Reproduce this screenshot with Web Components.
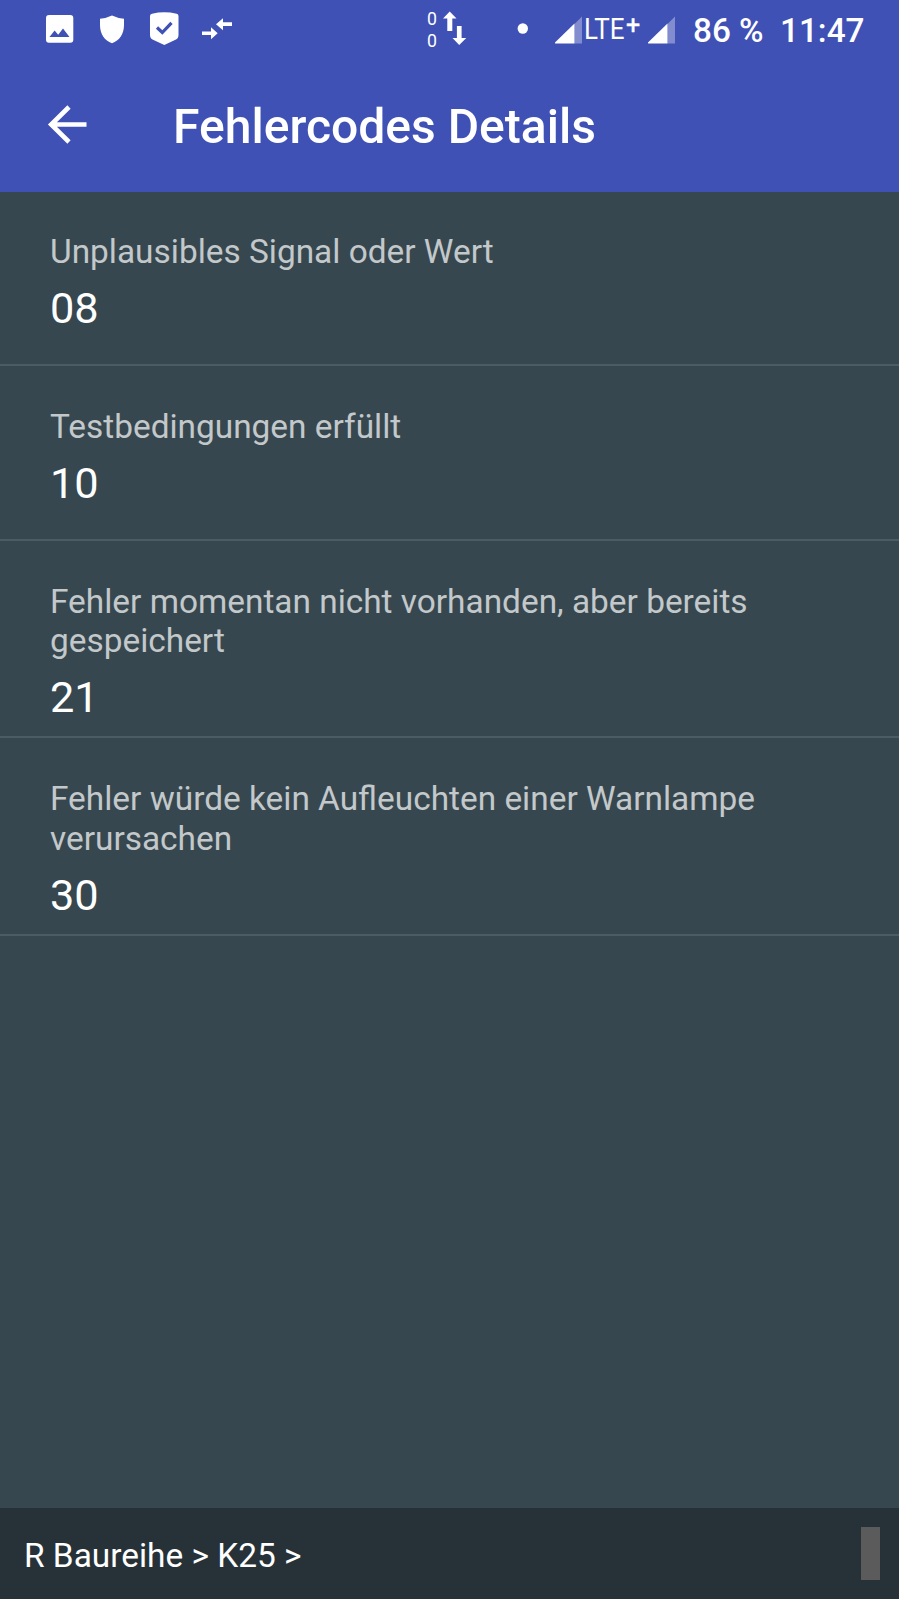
<!DOCTYPE html>
<html lang="de">
<head>
<meta charset="utf-8">
<title>Fehlercodes Details</title>
<style>
html,body{margin:0;height:100%;background:#37474f}
body{font-family:Roboto,"Noto Sans",sans-serif;color:#fff;overflow:hidden}
</style>
</head>
<body>
<fault-screen>
  <status-bar slot="top"></status-bar>
  <app-bar slot="top">Fehlercodes Details</app-bar>
  <fault-item><span>Unplausibles Signal oder Wert</span><span slot="code">08</span></fault-item>
  <fault-item><span>Testbedingungen erfüllt</span><span slot="code">10</span></fault-item>
  <fault-item><span>Fehler momentan nicht vorhanden, aber bereits gespeichert</span><span slot="code">21</span></fault-item>
  <fault-item><span>Fehler würde kein Aufleuchten einer Warnlampe verursachen</span><span slot="code">30</span></fault-item>
  <path-bar slot="bottom">R Baureihe &gt; K25 &gt;</path-bar>
</fault-screen>
<script>
const define = (name, html) => customElements.define(name, class extends HTMLElement {
  constructor() {
    super();
    this.attachShadow({mode: 'open'}).innerHTML = html;
  }
});

define('fault-screen', `
<style>
:host{display:flex;flex-direction:column;height:1599px;width:899px;background:#37474f}
header{height:192px;margin-bottom:-1px;background:#3f51b5;flex:none}
main{flex:1}
</style>
<header><slot name="top"></slot></header>
<main><slot></slot></main>
<slot name="bottom"></slot>`);

define('status-bar', `
<style>
:host{display:flex;height:60px;padding-left:46px;box-sizing:border-box;align-items:flex-start;fill:#fff}
svg{display:block;height:60px;flex:none}
span{white-space:nowrap;flex:none;line-height:40px;font-size:33.3px;font-weight:500}
.rate{display:flex;flex-direction:column;width:14px;margin:8px 0 0 194px}
.rate span{font-size:19px;font-weight:400;line-height:22px;transform:scaleX(.93);transform-origin:0 0}
.lte{font-size:29.5px;font-weight:400;margin:9px 0 0 1px;width:42px;letter-spacing:-.2px;transform:scaleX(.88);transform-origin:0 0}
.plus{font-size:25px;font-weight:400;-webkit-text-stroke:.4px #fff;line-height:32px;margin:10px 0 0 0;width:23px}
.pct{margin:11px 0 0 17px;width:87px}
.time{margin-top:11px}
</style>
<svg width="28" viewBox="46 0 28 60"><path fill-rule="evenodd" d="M49 15H70.3Q73.3 15 73.3 18V39.7Q73.3 42.7 70.3 42.7H49Q46 42.7 46 39.7V18Q46 15 49 15ZM49.5 37H69.5L63 28.5L58.2 34.7L54.6 30.4Z"/></svg>
<svg width="24" viewBox="100 0 24 60" style="margin-left:26px"><path d="M112 15.5Q117 18 124 18.7V25C124 34 119.500 40.500 112 43.200C104.500 40.500 100 34 100 25V18.700Q107 18 112 15.500Z"/></svg>
<svg width="29" viewBox="150 0 29 60" style="margin-left:26px"><path d="M152 13.700Q164.300 11 176.600 13.700Q178.500 14 178.500 16V35Q178.500 38.500 175.500 39.800L164.300 45L153 39.800Q150 38.500 150 35V16Q150 14 152 13.700Z"/><path d="M157 27.500L162.300 32.500L171.500 22.800" fill="none" stroke="#3f51b5" stroke-width="3.200"/></svg>
<svg width="31" viewBox="202 0 31 60" style="margin-left:23px"><path d="M202 31.500H211V27.300L217.700 33.200L211 39.200V35H202ZM232 22.300H223V18.300L216 24.200L223 30.200V26H232Z"/></svg>
<div class="rate"><span>0</span><span>0</span></div>
<svg width="26" viewBox="442 0 26 60" style="margin-left:1px"><path d="M449.700 11.500L456.500 18.500H452.300V31H447.300V18.500H443ZM459.200 45L452.500 38H456.900V26H461.600V38H466.300Z"/></svg>
<svg width="12" viewBox="517 0 12 60" style="margin-left:49px"><circle cx="522.800" cy="28.500" r="5.200"/></svg>
<svg width="28" viewBox="555 0 28 60" style="margin-left:26px"><path opacity=".35" d="M574.500 24L582 16.500V43.500H574.500Z"/><path d="M574.500 23.500V43.500H556Q554 43.500 555.500 42Z"/></svg>
<span class="lte">LTE</span><span class="plus">+</span>
<svg width="28" viewBox="648 0 28 60" style="margin-left:-1px"><path opacity=".35" d="M667.500 24L675 16.500V43.500H667.500Z"/><path d="M667.500 23.500V43.500H649Q647 43.500 648.500 42Z"/></svg>
<span class="pct">86 %</span><span class="time">11:47</span>`);

define('app-bar', `
<style>
:host{display:flex;align-items:center;height:131px;font-size:48.05px;font-weight:500;line-height:58px;white-space:nowrap}
svg{width:40px;height:42px;margin:-1px 86px 0 47px;flex:none}
div{margin-top:3px}
</style>
<svg viewBox="47 104 40 42" fill="none" stroke="#fff" stroke-width="4.600"><path d="M86.500 124.500H50M69 107L51.200 124.500L69 142"/></svg>
<div><slot></slot></div>`);

define('fault-item', `
<style>
:host{display:flex;flex-direction:column;gap:11.9px;box-sizing:border-box;min-height:175px;padding:41px 50px 12px;border-bottom:2px solid #4b5c63}
.label{font-size:33.4px;line-height:39.3px;color:#c3c8ca;width:760px}
.code{font-size:43.3px;line-height:52px}
</style>
<div class="label"><slot></slot></div>
<div class="code"><slot name="code"></slot></div>`);

define('path-bar', `
<style>
:host{display:flex;align-items:center;justify-content:space-between;height:91px;flex:none;box-sizing:border-box;padding:0 19px 0 24px;background:#273238;font-size:33.4px;line-height:40px}
i{width:19px;height:53px;background:#5b5b5b}
div{margin-top:4px}
</style>
<div><slot></slot></div><i></i>`);
</script>
</body>
</html>
